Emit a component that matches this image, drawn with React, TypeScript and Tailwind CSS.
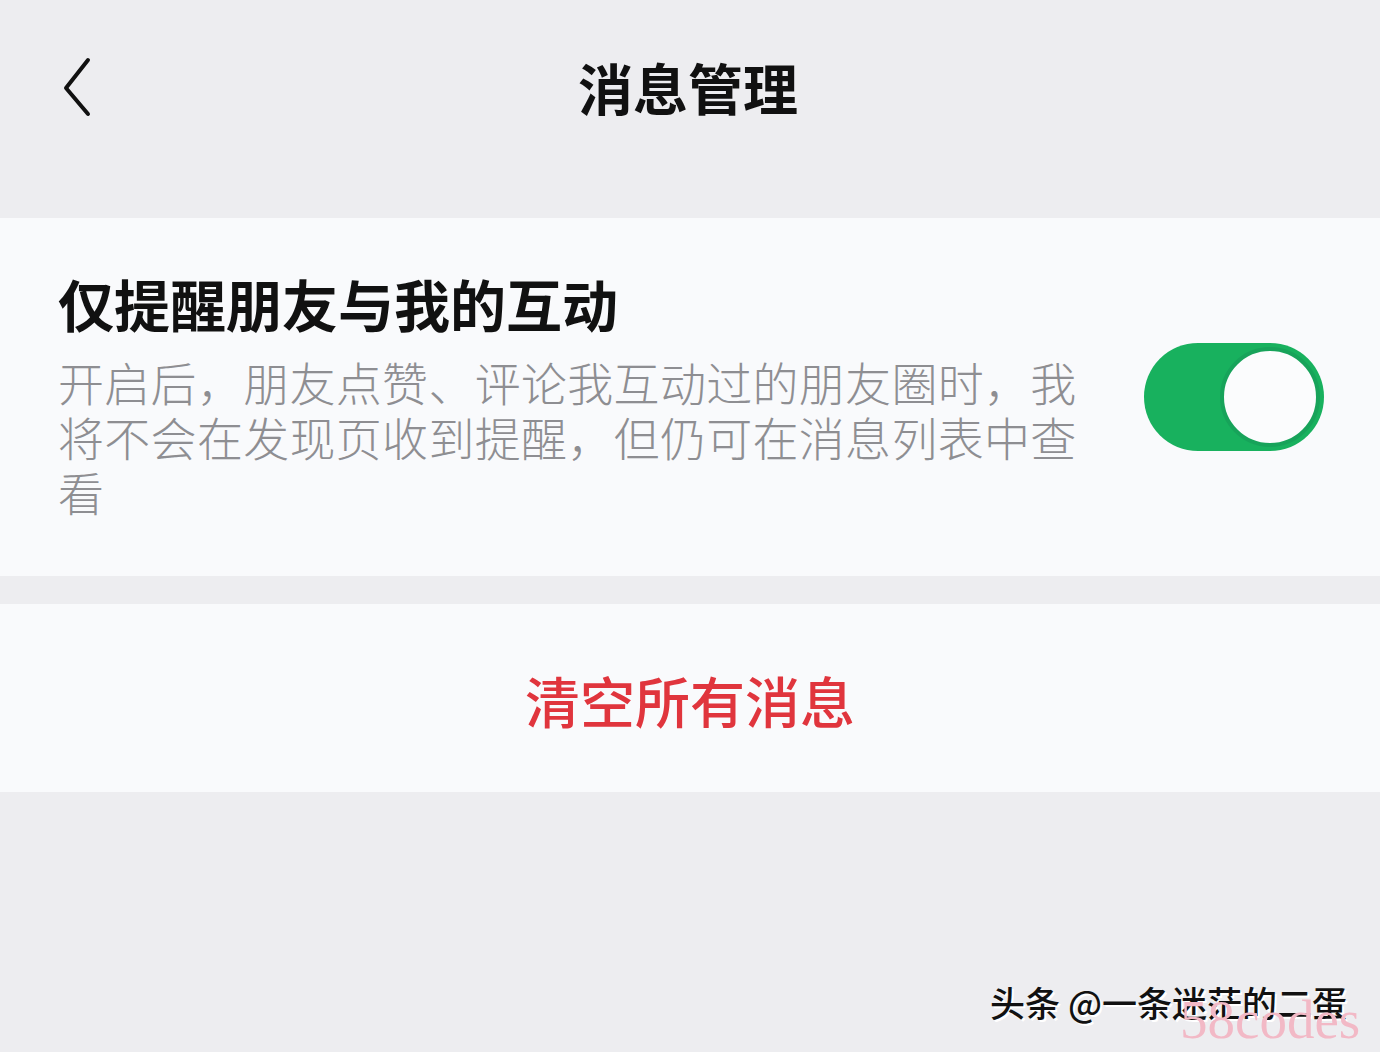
import React from "react";

const CJK = { fontFamily: '"Noto Sans CJK SC", "Noto Sans", sans-serif' };

export default function App() {
  return (
    <div className="w-[1380px] h-[1052px] bg-[#ededf0] flex flex-col overflow-hidden relative" style={CJK}>
      {/* nav */}
      <div className="h-[218px] flex items-start relative">
        <div className="absolute left-[56px] top-[54px]">
          <svg width="40" height="66" viewBox="0 0 40 66">
            <path d="M32 6 L10 34 L32 60" fill="none" stroke="#111" strokeWidth="4" strokeLinecap="round" strokeLinejoin="round" />
          </svg>
        </div>
        <div className="w-full text-center mt-[49px] text-[55px] leading-[74px] font-bold text-[#111] pr-[4px]">消息管理</div>
      </div>

      {/* card 1 */}
      <div className="h-[358px] bg-[#f9fafc] flex items-start pl-[58px] pr-[56px]">
        <div className="flex-1 mt-[47px]">
          <div className="text-[56px] leading-[76px] font-bold text-[#111]">仅提醒朋友与我的互动</div>
          <div className="text-[46px] leading-[55px] text-[#8e8e92] font-light mt-[13px] w-[1030px] tracking-[0.3px]">
            开启后，朋友点赞、评论我互动过的朋友圈时，我将不会在发现页收到提醒，但仍可在消息列表中查看
          </div>
        </div>
        <div className="mt-[125px] w-[180px] h-[108px] rounded-full bg-[#18b15e] flex items-center justify-end pr-[4px]">
          <div className="w-[100px] h-[100px] rounded-full bg-[#fbfcfd] border-[4px] border-[#17a35a]" />
        </div>
      </div>

      <div className="h-[28px]" />

      {/* card 2 */}
      <div className="h-[188px] bg-[#f9fafc] flex items-center justify-center">
        <div className="text-[55px] leading-[70px] font-medium text-[#e0353d] pt-[2px]">清空所有消息</div>
      </div>

      <div className="flex-1" />

      {/* watermark */}
      <div className="absolute left-[990px] top-[980px] text-[35px] leading-[44px] text-[#111] font-medium" style={{ textShadow: "2px 2px 0 #fff" }}>
        头条 @一条迷茫的二蛋
      </div>
      <div className="absolute left-[1180px] top-[990px] text-[55px] leading-[60px] text-[#f2b9c6]" style={{ fontFamily: '"Liberation Serif", serif' }}>
        58codes
      </div>
    </div>
  );
}
